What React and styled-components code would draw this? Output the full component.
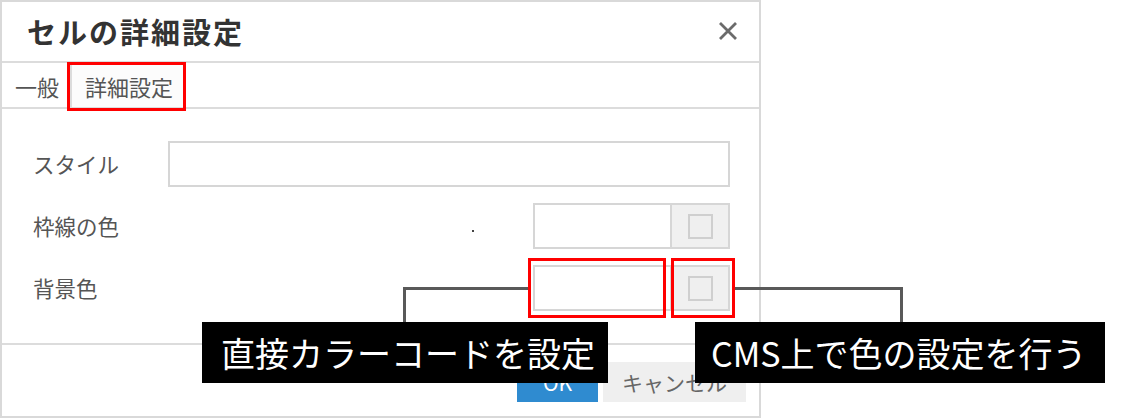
import React from "react";
import styled, { createGlobalStyle } from "styled-components";

const Global = createGlobalStyle`
  html, body { margin: 0; padding: 0; background: #fff; }
  body { font-family: "Noto Sans CJK JP", "Noto Sans", sans-serif; }
  * { box-sizing: border-box; }
`;

const Page = styled.div`
  position: relative;
  width: 1127px;
  height: 418px;
  overflow: hidden;
  background: #fff;
`;

const Dialog = styled.div`
  width: 761px;
  height: 418px;
  border: 2px solid #d9d9d9;
  display: flex;
  flex-direction: column;
  background: #fff;
`;

const Header = styled.div`
  height: 61px;
  display: flex;
  align-items: center;
  justify-content: space-between;
  padding: 0 20px 2px 25px;
  border-bottom: 2px solid #dcdcdc;
`;

const Title = styled.h1`
  margin: 0;
  font-size: 29px;
  font-weight: 700;
  color: #333;
  letter-spacing: 2px;
`;

const Close = styled.button`
  border: 0;
  background: none;
  padding: 0;
  width: 22px;
  height: 22px;
  display: flex;
  align-items: center;
  justify-content: center;
  cursor: pointer;
`;

const Tabs = styled.div`
  height: 46px;
  display: flex;
  align-items: stretch;
  border-bottom: 2px solid #dcdcdc;
`;

const Tab = styled.div`
  display: flex;
  align-items: center;
  padding: 2px ${(p) => (p.$active ? "12px" : "11px")} 0 13px;
  font-size: 22px;
  color: #555;
  background: ${(p) => (p.$active ? "#fcfcfc" : "transparent")};
  border-left: ${(p) => (p.$active ? "2px solid #dcdcdc" : "0")};
`;

const Body = styled.div`
  padding: 32px 29px 32px 31px;
  display: flex;
  flex-direction: column;
  gap: 16px;
`;

const Row = styled.div`
  height: 46px;
  display: flex;
  align-items: center;
`;

const Label = styled.div`
  width: 135px;
  flex: none;
  font-size: 21.5px;
  color: #555;
  padding-bottom: 2px;
`;

const TextInput = styled.div`
  flex: 1;
  height: 46px;
  border: 2px solid #d6d6d6;
  background: #fff;
`;

const Spacer = styled.div`
  flex: 1;
`;

const Dot = styled.span`
  width: 2px;
  height: 2px;
  background: #444;
  margin: 10px 59px 0 0;
`;

const ColorGroup = styled.div`
  width: 197px;
  height: 46px;
  display: flex;
  border: 2px solid #d6d6d6;
`;

const ColorText = styled.div`
  width: 137px;
  background: #fff;
  border-right: 2px solid #d6d6d6;
`;

const ColorButton = styled.div`
  flex: 1;
  background: #f0f0f0;
  display: flex;
  align-items: center;
  justify-content: center;
`;

const Swatch = styled.div`
  width: 25px;
  height: 25px;
  border: 2px solid #cfcfcf;
  background: #efefef;
`;

const Footer = styled.div`
  flex: 1;
  border-top: 2px solid #dcdcdc;
  display: flex;
  justify-content: flex-end;
  align-items: flex-end;
  gap: 5px;
  padding: 0 13px 14px 0;
`;

const Button = styled.button`
  height: 40px;
  border: 0;
  padding: 0;
  font-family: inherit;
  font-size: 21px;
  width: ${(p) => (p.$primary ? "81px" : "143px")};
  background: ${(p) => (p.$primary ? "#2f8bd0" : "#efefef")};
  color: ${(p) => (p.$primary ? "#fff" : "#666")};
`;

const Highlight = styled.div`
  position: absolute;
  border: 3px solid #ff0000;
  left: ${(p) => p.$x}px;
  top: ${(p) => p.$y}px;
  width: ${(p) => p.$w}px;
  height: ${(p) => p.$h}px;
  pointer-events: none;
`;

const Connector = styled.div`
  position: absolute;
  border-top: 3px solid #595959;
  ${(p) => (p.$side === "left" ? "border-left" : "border-right")}: 3px solid #595959;
  left: ${(p) => p.$x}px;
  top: ${(p) => p.$y}px;
  width: ${(p) => p.$w}px;
  height: ${(p) => p.$h}px;
`;

const Callout = styled.div`
  position: absolute;
  left: ${(p) => p.$x}px;
  top: 322px;
  width: ${(p) => p.$w}px;
  height: 61px;
  background: #000;
  color: #fff;
  font-size: 34px;
  display: flex;
  align-items: center;
  padding-left: ${(p) => p.$pad}px;
  white-space: nowrap;
  line-height: 1;
`;

function XIcon() {
  return (
    <svg width="20" height="20" viewBox="0 0 20 20">
      <path d="M2 2 L18 18 M18 2 L2 18" stroke="#6b6b6b" strokeWidth="2.8" strokeLinecap="butt" />
    </svg>
  );
}

function ColorField() {
  return (
    <ColorGroup>
      <ColorText />
      <ColorButton>
        <Swatch />
      </ColorButton>
    </ColorGroup>
  );
}

export default function App() {
  return (
    <Page>
      <Global />
      <Dialog>
        <Header>
          <Title>セルの詳細設定</Title>
          <Close aria-label="閉じる">
            <XIcon />
          </Close>
        </Header>
        <Tabs>
          <Tab>一般</Tab>
          <Tab $active>詳細設定</Tab>
        </Tabs>
        <Body>
          <Row>
            <Label>スタイル</Label>
            <TextInput />
          </Row>
          <Row>
            <Label>枠線の色</Label>
            <Spacer />
            <Dot />
            <ColorField />
          </Row>
          <Row>
            <Label>背景色</Label>
            <Spacer />
            <ColorField />
          </Row>
        </Body>
        <Footer>
          <Button $primary>OK</Button>
          <Button>キャンセル</Button>
        </Footer>
      </Dialog>

      <Highlight $x={67} $y={62} $w={119} $h={49} />
      <Highlight $x={528} $y={258} $w={138} $h={60} />
      <Highlight $x={671} $y={258} $w={64} $h={60} />

      <Connector $side="left" $x={403} $y={287} $w={125} $h={35} />
      <Connector $side="right" $x={735} $y={287} $w={168} $h={35} />

      <Callout $x={202} $w={406} $pad={19}>直接カラーコードを設定</Callout>
      <Callout $x={695} $w={410} $pad={16}>CMS上で色の設定を行う</Callout>
    </Page>
  );
}
